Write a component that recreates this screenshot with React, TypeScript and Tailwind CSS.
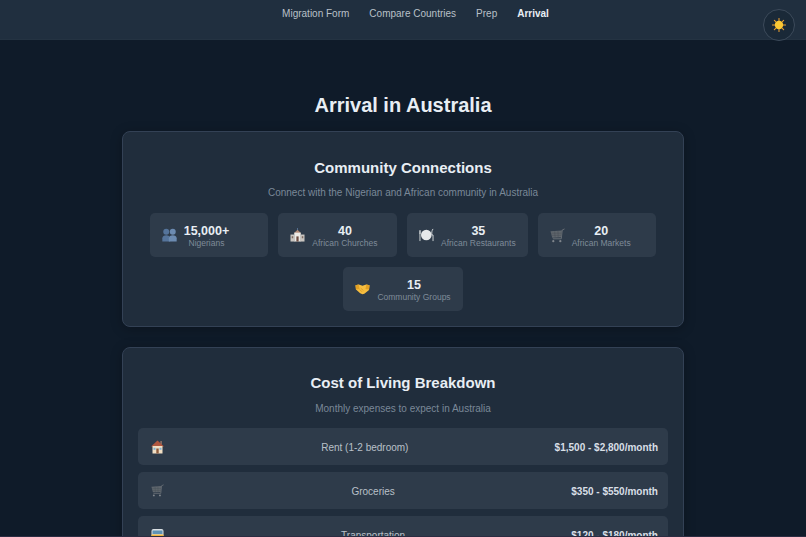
import type { ReactNode } from 'react';

const PeopleIcon = () => (
  <svg width="15" height="14" viewBox="0 0 16 15">
    <g fill="#55749b">
      <circle cx="4.500" cy="4" r="3.200" />
      <path d="M0.300 14.500v-3.500c0-2 2-3.200 4.200-3.200S8.700 9 8.700 11v3.500z" />
    </g>
    <g fill="#6c8bb1">
      <circle cx="11.500" cy="4" r="3.200" />
      <path d="M7.300 14.500v-3.500c0-2 2-3.200 4.200-3.200s4.200 1.200 4.200 3.200v3.500z" />
    </g>
  </svg>
);

const ChurchIcon = () => (
  <svg width="15" height="14" viewBox="0 0 16 15">
    <rect x="7.600" y="0" width="0.800" height="3" fill="#5f7fa6" />
    <path d="M8 2 12 5.500H4z" fill="#b08a78" />
    <rect x="4.500" y="5" width="7" height="9.500" fill="#eceae6" />
    <rect x="0.500" y="7" width="4.500" height="7.500" fill="#c9c5c0" />
    <rect x="11" y="7" width="4.500" height="7.500" fill="#c9c5c0" />
    <rect x="6.800" y="9" width="2.400" height="5.500" fill="#6d4c41" />
    <rect x="1.800" y="8.800" width="1.600" height="2.200" fill="#7d6a62" />
    <rect x="12.600" y="8.800" width="1.600" height="2.200" fill="#7d6a62" />
  </svg>
);

const PlateIcon = () => (
  <svg width="15" height="14" viewBox="0 0 16 15">
    <circle cx="7.800" cy="7.500" r="5.700" fill="#e6e8ea" />
    <path d="M15 1c-1.300 1.500-1.600 4-1.200 6.500h1.200V14" stroke="#d5d9dc" strokeWidth="1" fill="none" />
    <path d="M1 2.500V14" stroke="#d5d9dc" strokeWidth="1" />
    <path d="M0.300 2.500v3.500h1.400V2.500" stroke="#d5d9dc" strokeWidth="0.600" fill="none" />
  </svg>
);

const CartIcon = ({ size = 15 }: { size?: number }) => (
  <svg width={size} height={size} viewBox="0 0 16 16">
    <path d="M15.500 1 13 2.200 12 11.500H3" stroke="#6b7177" strokeWidth="1" fill="none" />
    <path d="M0.500 3.500 12.800 2.600 12 9.800 2.400 10.300z" fill="#5f666d" />
    <path d="M1.500 5.500h10.800M2 7.800h10M5 3.500l.4 6.500M8.500 3.200 8.700 10" stroke="#444c54" strokeWidth="0.500" />
    <circle cx="3.500" cy="14" r="1.200" fill="#80868c" />
    <circle cx="11" cy="14" r="1.200" fill="#80868c" />
  </svg>
);

const HandshakeIcon = () => (
  <svg width="15" height="14" viewBox="0 0 16 15">
    <path d="M0.500 3.500 4 2.800 8 4l4-1.200 3.500.7-.5 5-5 4-2 .5-2.500-1L1 8z" fill="#f6bd3f" />
    <path d="M0.500 3.500 3.800 2.800 4.800 7.500 1 8z" fill="#e2a024" />
    <path d="M15.500 3.500 12.200 2.800 11.200 7.500 15 8z" fill="#e2a024" />
    <path d="M6 6.500l3 2.700M5 8l2.500 2.500" stroke="#d08f1a" strokeWidth="0.700" />
  </svg>
);

const HouseIcon = () => (
  <svg width="13" height="14" viewBox="0 0 13 14">
    <rect x="9.300" y="1" width="1.600" height="3.500" fill="#8d6e63" />
    <path d="M6.500 0.500 13 6.500H0z" fill="#b0573f" />
    <rect x="1.500" y="6" width="10" height="7.500" fill="#f1dfc4" />
    <rect x="5.300" y="8.500" width="2.400" height="5" fill="#8d5a3c" />
    <rect x="2.500" y="7.800" width="2" height="2" fill="#7fb2d6" />
    <rect x="8.500" y="7.800" width="2" height="2" fill="#7fb2d6" />
  </svg>
);

const BusIcon = () => (
  <svg width="13" height="14" viewBox="0 0 13 14">
    <rect x="0.500" y="1" width="12" height="12" rx="2" fill="#d9dfe3" />
    <rect x="1.500" y="2.500" width="10" height="3.500" fill="#5f93b5" />
    <rect x="0.500" y="6.500" width="12" height="4" fill="#eeb33a" />
  </svg>
);

const SunIcon = () => (
  <svg width="14" height="14" viewBox="0 0 16 16">
    <path
      d="M8 0.500v2.500M8 13v2.500M0.500 8H3M13 8h2.500M2.700 2.700l1.800 1.800M11.500 11.500l1.800 1.800M2.700 13.300l1.800-1.800M11.500 4.500l1.800-1.800"
      stroke="#f0a22e"
      strokeWidth="1.200"
      strokeLinecap="round"
    />
    <circle cx="8" cy="8" r="4.800" fill="#fcc834" />
  </svg>
);

type Stat = { icon: ReactNode; value: string; label: string };
type Cost = { icon: ReactNode; label: string; value: string };

const stats: Stat[] = [
  { icon: <PeopleIcon />, value: '15,000+', label: 'Nigerians' },
  { icon: <ChurchIcon />, value: '40', label: 'African Churches' },
  { icon: <PlateIcon />, value: '35', label: 'African Restaurants' },
  { icon: <CartIcon />, value: '20', label: 'African Markets' },
  { icon: <HandshakeIcon />, value: '15', label: 'Community Groups' },
];

const costs: Cost[] = [
  { icon: <HouseIcon />, label: 'Rent (1-2 bedroom)', value: '$1,500 - $2,800/month' },
  { icon: <CartIcon size={13} />, label: 'Groceries', value: '$350 - $550/month' },
  { icon: <BusIcon />, label: 'Transportation', value: '$120 - $180/month' },
];

const navLinks = ['Migration Form', 'Compare Countries', 'Prep', 'Arrival'];

export default function App() {
  return (
    <div className="relative h-screen overflow-hidden bg-[#0f1b29] font-['Liberation_Sans',sans-serif] text-[#e8eef4]">
      <nav className="flex h-10 justify-center gap-[20px] border-b border-[#243342] bg-[#202f3f] pt-[7px] pl-[25px] text-[10px] leading-[14px]">
        {navLinks.map((link) => (
          <a
            key={link}
            className={link === 'Arrival' ? 'font-bold text-[#e8eef4]' : 'text-[#b9c0c8]'}
          >
            {link}
          </a>
        ))}
      </nav>

      <button
        type="button"
        className="absolute top-[9px] left-[763px] flex h-[32px] w-[32px] items-center justify-center rounded-full border border-[#3c4a5a] bg-[#1a2938]"
      >
        <SunIcon />
      </button>

      <main className="mx-auto w-[562px] pt-[52px]">
        <h1 className="mb-[13px] text-center text-[20px] leading-[26px] font-bold">
          Arrival in Australia
        </h1>

        <section className="rounded-[8px] border border-[#334155] bg-[#202d3c] px-[16px] pt-[26px] pb-[15px] shadow-[0_2px_12px_rgba(0,0,0,0.25)]">
          <h2 className="text-center text-[15px] leading-[20px] font-bold">
            Community Connections
          </h2>
          <p className="mt-[8px] mb-[13px] text-center text-[10px] leading-[14px] text-[#7a8898]">
            Connect with the Nigerian and African community in Australia
          </p>
          <div className="flex flex-wrap justify-center gap-[10px]">
            {stats.map((s) => (
              <div
                key={s.label}
                className="flex h-[44px] min-w-[118.67px] items-center gap-[7px] rounded-[5px] bg-[#2e3b4a] px-[12px]"
              >
                <span className="flex w-[15px] shrink-0">{s.icon}</span>
                <div className="pt-[1px] text-center">
                  <div className="text-[12.500px] leading-[14px] font-bold">{s.value}</div>
                  <div className="text-[8.500px] leading-[10px] text-[#7f8b99]">{s.label}</div>
                </div>
              </div>
            ))}
          </div>
        </section>

        <section className="mt-[20px] rounded-[8px] border border-[#334155] bg-[#202d3c] px-[15px] pt-[25px] pb-[15px] shadow-[0_2px_12px_rgba(0,0,0,0.25)]">
          <h2 className="text-center text-[15px] leading-[20px] font-bold">
            Cost of Living Breakdown
          </h2>
          <p className="mt-[9px] mb-[12px] text-center text-[10px] leading-[14px] text-[#7a8898]">
            Monthly expenses to expect in Australia
          </p>
          <div className="flex flex-col gap-[7px]">
            {costs.map((c) => (
              <div
                key={c.label}
                className="flex h-[37px] items-center justify-between rounded-[5px] bg-[#2e3b4a] px-[10px] text-[10px]"
              >
                <span className="flex w-[27px] pl-[3px]">{c.icon}</span>
                <span className="pt-[1px] text-[#b9c0c8]">{c.label}</span>
                <span className="pt-[1px] font-bold text-[#d8dfe6]">{c.value}</span>
              </div>
            ))}
          </div>
        </section>
      </main>

      <div className="absolute inset-x-0 bottom-0 h-px bg-[#2b2c42]" />
    </div>
  );
}
